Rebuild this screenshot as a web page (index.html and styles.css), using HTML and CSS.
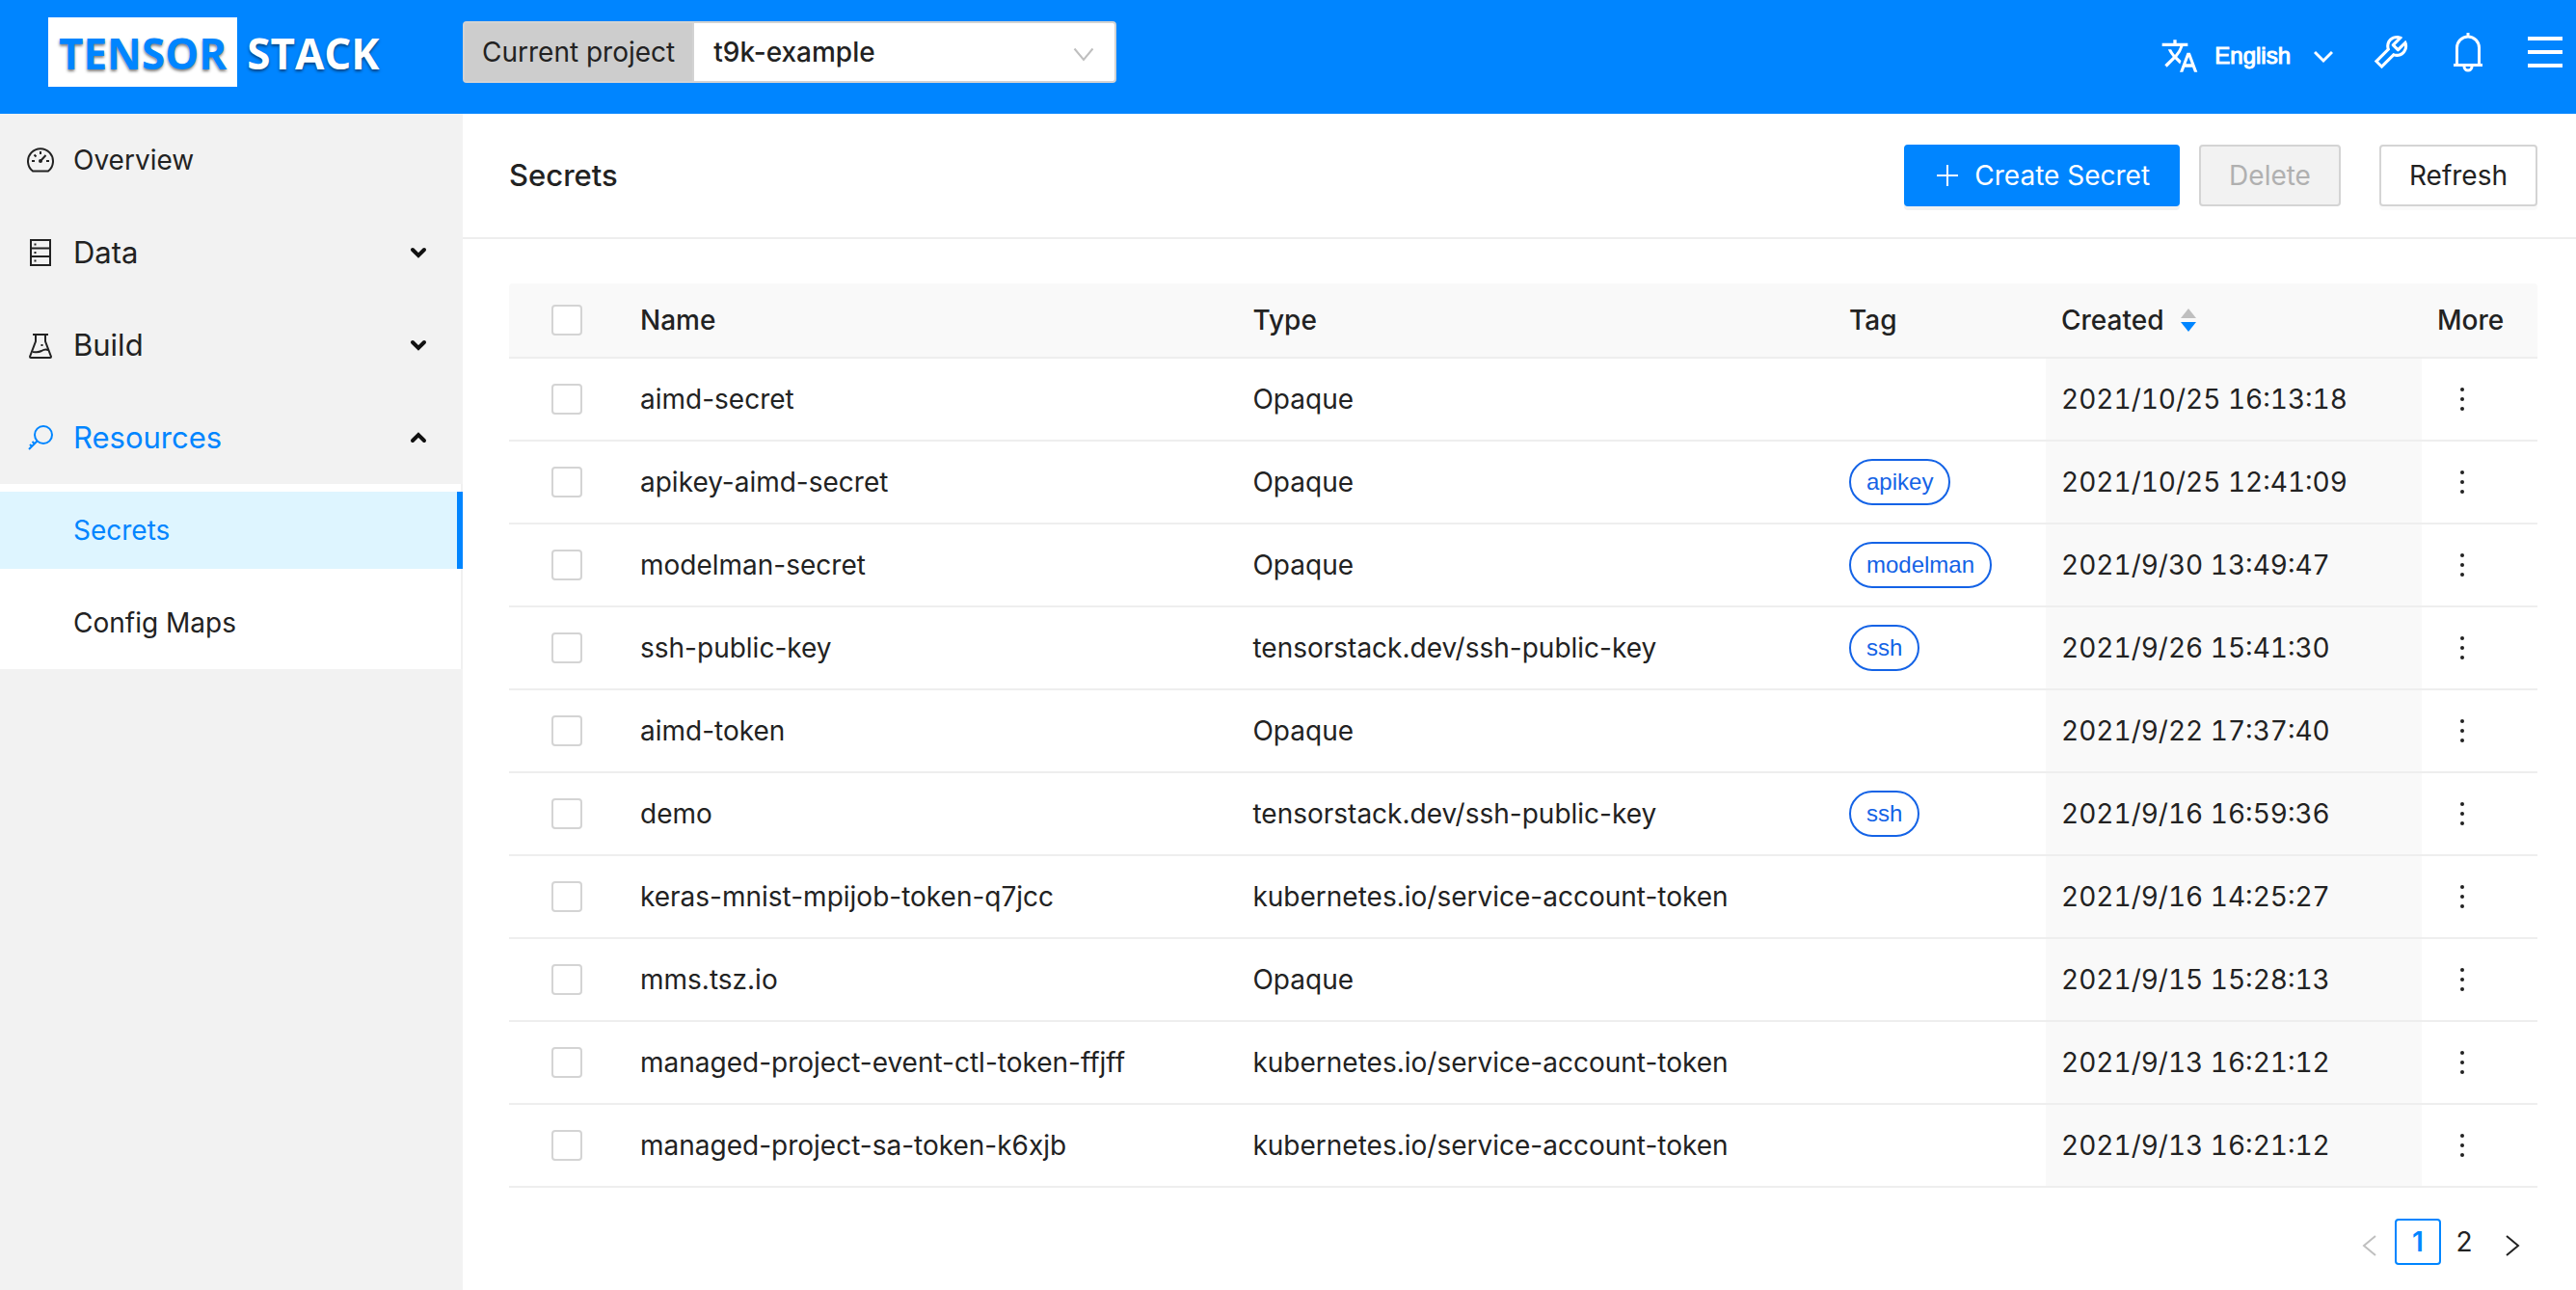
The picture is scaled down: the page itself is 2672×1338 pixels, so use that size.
FILE: index.html
```html
<!DOCTYPE html>
<html lang="en">
<head>
<meta charset="utf-8">
<title>Secrets</title>
<link rel="stylesheet" href="styles.css">
</head>
<body>
<header class="topbar">
  <a class="logo" href="#"><span class="logo-box">TENSOR</span><span class="logo-rest">STACK</span></a>
  <div class="project">
    <label class="project-label" for="project">Current project</label>
    <div class="project-field">
      <select id="project" class="project-select"><option>t9k-example</option></select>
      <svg class="project-arrow" width="24" height="24" viewBox="0 0 24 24" fill="none" stroke="#bfbfbf" stroke-width="2"><path d="M2.500 6.500 12 18l9.500-11.500"/></svg>
    </div>
  </div>
  <nav class="tools" aria-label="Tools">
    <button class="lang" type="button">
      <svg width="40" height="40" viewBox="0 0 24 24" fill="currentColor"><path d="M12.870 15.070l-2.540-2.510.030-.030A17.520 17.520 0 0 0 14.070 6H17V4h-7V2H8v2H1v1.990h11.170C11.500 7.920 10.440 9.750 9 11.350 8.070 10.320 7.300 9.190 6.690 8h-2c.730 1.630 1.730 3.170 2.980 4.560l-5.090 5.020L4 19l5-5 3.110 3.110.760-2.040zM18.500 10h-2L12 22h2l1.120-3h4.750L21 22h2l-4.500-12zm-2.620 7l1.620-4.330L19.120 17h-3.240z"/></svg>
      <span class="lang-name">English</span>
      <svg width="20" height="20" viewBox="0 0 20 20" fill="none" stroke="currentColor" stroke-width="3"><path d="M1 6l9 9 9-9"/></svg>
    </button>
    <button class="tool" type="button" aria-label="Settings"><svg width="44" height="44" viewBox="0 0 1024 1024" fill="currentColor"><path d="M876.600 239.500c-.500-.900-1.200-1.800-2-2.500-5-5-13.100-5-18.100 0L684.200 409.300l-67.900-67.900L788.700 169c.800-.800 1.400-1.600 2-2.500 3.600-6.100 1.600-13.900-4.500-17.500-98.200-58-226.800-44.700-311.300 39.700-67 67-89.200 162-66.500 247.400l-293 293c-3 3-2.800 7.900.300 11l169.700 169.700c3.100 3.100 8.100 3.300 11 .300l292.900-292.900c85.500 22.800 180.500.700 247.600-66.400 84.400-84.500 97.700-213.100 39.700-311.300zM786 499.800c-58.100 58.100-145.300 69.300-214.600 33.600l-8.800 8.800-.100-.100-274 274.100-79.200-79.200 230.100-230.100s0 .100.100.100l52.800-52.800c-35.700-69.300-24.500-156.500 33.600-214.600a184.200 184.200 0 0 1 144-53.500L537 318.900a32.050 32.050 0 0 0 0 45.300l124.500 124.500a32.050 32.050 0 0 0 45.300 0l132.800-132.800c3.700 51.800-14.400 104.800-53.600 143.900z"/></svg></button>
    <button class="tool" type="button" aria-label="Notifications"><svg width="40" height="44" viewBox="0 0 40 44" fill="none" stroke="currentColor" stroke-width="3"><path d="M8.500 35V17.500a11.500 11.500 0 0 1 23 0V35M5 35.500h30M20 6V2M16 36v1a4 4 0 0 0 8 0v-1"/></svg></button>
    <button class="tool" type="button" aria-label="Menu"><svg width="36" height="32" viewBox="0 0 36 32" fill="currentColor"><path d="M0 0h36v4H0zM0 14h36v4H0zM0 28h36v4H0z"/></svg></button>
  </nav>
</header>
<div class="body">
  <nav class="sidebar" aria-label="Main">
    <a class="item item-small" href="#"><svg class="item-icon" viewBox="0 0 28 28" fill="none" stroke="currentColor" stroke-width="2"><path d="M6 25.500a13 13 0 1 1 16 0z"/><path d="M14 5v3M5 15h3M20 15h3M7.500 8.500l2 2M14 15l5.500-6"/><circle cx="14" cy="15" r="1"/></svg><span>Overview</span></a>
    <button class="item" type="button"><svg class="item-icon" viewBox="0 0 28 28" fill="none" stroke="currentColor" stroke-width="2"><path d="M4 1h20v26H4zM4 9.500h20M4 18h20"/><path d="M7.500 5.500h2M7.500 14h2M7.500 22.500h2"/></svg><span class="item-text">Data</span><svg class="item-chevron" viewBox="0 0 20 20"><path d="M4 7l6 6 6-6"/></svg></button>
    <button class="item" type="button"><svg class="item-icon" viewBox="0 0 28 28" fill="none" stroke="currentColor" stroke-width="2"><path d="M6 3h16M9 3v7L3 26q0 1 1 1h20q1 0 1-1L19 10V3M6 21c4 0 5 1 9-1 3-2 5-2 7-1"/><path d="M14.500 14h2"/></svg><span class="item-text">Build</span><svg class="item-chevron" viewBox="0 0 20 20"><path d="M4 7l6 6 6-6"/></svg></button>
    <button class="item item-open" type="button" aria-expanded="true"><svg class="item-icon" viewBox="0 0 28 28" fill="none" stroke="currentColor" stroke-width="2"><circle cx="17" cy="11" r="9"/><path d="M10.500 17.500L2 26M5.500 18l3 3M3 21l2.500 2.500"/></svg><span class="item-text">Resources</span><svg class="item-chevron" viewBox="0 0 20 20"><path d="M4 13l6-6 6 6"/></svg></button>
    <div class="sub">
      <a class="sub-item sub-active" href="#" aria-current="page">Secrets</a>
      <a class="sub-item" href="#">Config Maps</a>
    </div>
  </nav>
  <main class="main">
    <div class="page-head">
      <h1 class="title">Secrets</h1>
      <button class="btn btn-primary" type="button"><svg width="28" height="28" viewBox="0 0 28 28" stroke="currentColor" stroke-width="2"><path d="M14 3v22M3 14h22"/></svg>Create Secret</button>
      <button class="btn btn-delete" type="button" disabled>Delete</button>
      <button class="btn" type="button">Refresh</button>
    </div>
    <div class="content">
      <table class="table">
        <colgroup><col class="c-check"><col><col class="c-type"><col class="c-tag"><col class="c-created"><col class="c-more"></colgroup>
        <thead><tr><th><input class="check" type="checkbox" aria-label="Select all"></th><th>Name</th><th>Type</th><th>Tag</th><th><span class="sorter">Created<svg width="16" height="24" viewBox="0 0 16 24"><path fill="#bfbfbf" d="M0 10L8 0l8 10z"/><path fill="#0085ff" d="M0 14h16L8 24z"/></svg></span></th><th>More</th></tr></thead>
        <tbody>
          <tr><td><input class="check" type="checkbox" aria-label="aimd-secret"></td><td>aimd-secret</td><td>Opaque</td><td></td><td class="date">2021/10/25 16:13:18</td><td><button class="more" type="button" aria-label="More actions"><i></i><i></i><i></i></button></td></tr>
          <tr><td><input class="check" type="checkbox" aria-label="apikey-aimd-secret"></td><td>apikey-aimd-secret</td><td>Opaque</td><td><span class="tag">apikey</span></td><td class="date">2021/10/25 12:41:09</td><td><button class="more" type="button" aria-label="More actions"><i></i><i></i><i></i></button></td></tr>
          <tr><td><input class="check" type="checkbox" aria-label="modelman-secret"></td><td>modelman-secret</td><td>Opaque</td><td><span class="tag">modelman</span></td><td class="date">2021/9/30 13:49:47</td><td><button class="more" type="button" aria-label="More actions"><i></i><i></i><i></i></button></td></tr>
          <tr><td><input class="check" type="checkbox" aria-label="ssh-public-key"></td><td>ssh-public-key</td><td>tensorstack.dev/ssh-public-key</td><td><span class="tag">ssh</span></td><td class="date">2021/9/26 15:41:30</td><td><button class="more" type="button" aria-label="More actions"><i></i><i></i><i></i></button></td></tr>
          <tr><td><input class="check" type="checkbox" aria-label="aimd-token"></td><td>aimd-token</td><td>Opaque</td><td></td><td class="date">2021/9/22 17:37:40</td><td><button class="more" type="button" aria-label="More actions"><i></i><i></i><i></i></button></td></tr>
          <tr><td><input class="check" type="checkbox" aria-label="demo"></td><td>demo</td><td>tensorstack.dev/ssh-public-key</td><td><span class="tag">ssh</span></td><td class="date">2021/9/16 16:59:36</td><td><button class="more" type="button" aria-label="More actions"><i></i><i></i><i></i></button></td></tr>
          <tr><td><input class="check" type="checkbox" aria-label="keras-mnist-mpijob-token-q7jcc"></td><td>keras-mnist-mpijob-token-q7jcc</td><td>kubernetes.io/service-account-token</td><td></td><td class="date">2021/9/16 14:25:27</td><td><button class="more" type="button" aria-label="More actions"><i></i><i></i><i></i></button></td></tr>
          <tr><td><input class="check" type="checkbox" aria-label="mms.tsz.io"></td><td>mms.tsz.io</td><td>Opaque</td><td></td><td class="date">2021/9/15 15:28:13</td><td><button class="more" type="button" aria-label="More actions"><i></i><i></i><i></i></button></td></tr>
          <tr><td><input class="check" type="checkbox" aria-label="managed-project-event-ctl-token-ffjff"></td><td>managed-project-event-ctl-token-ffjff</td><td>kubernetes.io/service-account-token</td><td></td><td class="date">2021/9/13 16:21:12</td><td><button class="more" type="button" aria-label="More actions"><i></i><i></i><i></i></button></td></tr>
          <tr><td><input class="check" type="checkbox" aria-label="managed-project-sa-token-k6xjb"></td><td>managed-project-sa-token-k6xjb</td><td>kubernetes.io/service-account-token</td><td></td><td class="date">2021/9/13 16:21:12</td><td><button class="more" type="button" aria-label="More actions"><i></i><i></i><i></i></button></td></tr>
        </tbody>
      </table>
      <nav class="pages" aria-label="Pages">
        <button class="page-arrow" type="button" disabled aria-label="Previous page"><svg width="24" height="24" viewBox="0 0 24 24"><path d="M18 2L6 12l12 10"/></svg></button>
        <a class="page page-current" href="#" aria-current="page">1</a>
        <a class="page" href="#">2</a>
        <button class="page-arrow" type="button" aria-label="Next page"><svg width="24" height="24" viewBox="0 0 24 24"><path d="M6 2l12 10L6 22"/></svg></button>
      </nav>
    </div>
  </main>
</div>
</body>
</html>
```
FILE: styles.css
```css
*, *::before, *::after { box-sizing: border-box; }

body {
  margin: 0;
  min-height: 100vh;
  display: flex;
  flex-direction: column;
  background: #fff;
  color: #222;
  font: 400 28px/44px Inter, "Liberation Sans", sans-serif;
}

a { color: inherit; text-decoration: none; }
button { font: inherit; color: inherit; margin: 0; padding: 0; border: 0; background: none; }
svg { display: block; flex: none; }

/* Top bar */
.topbar {
  display: flex;
  align-items: center;
  height: 118px;
  padding: 0 12px 10px 50px;
  background: #0085ff;
  color: #fff;
}
.logo {
  display: flex;
  width: 430px;
  height: 72px;
  flex: none;
  gap: 10px;
  font: 700 44px/74px "Open Sans", sans-serif;
  text-shadow: 0 2px 3px rgba(0, 0, 0, .5);
}
.logo-box { padding: 0 11px; background: #fff; color: #0085ff; }

.project { display: flex; width: 678px; height: 64px; border: 2px solid #d3d3d3; border-radius: 4px; background: #fff; color: #222; }
.project-label { padding: 0 18px; line-height: 60px; background: #cdcdcd; border-right: 2px solid #d3d3d3; }
.project-field { position: relative; flex: 1; }
.project-select {
  width: 100%;
  height: 60px;
  padding: 0 60px 0 20px;
  border: 0;
  background: none;
  appearance: none;
  color: inherit;
  font: inherit;
  font-weight: 500;
}
.project-arrow { position: absolute; right: 20px; top: 20px; pointer-events: none; }

.tools { display: flex; align-items: center; margin-left: auto; gap: 40px; }
.tool { display: grid; place-content: center; width: 40px; height: 44px; }
.lang { display: flex; align-items: center; padding-top: 8px; gap: 16px; }
.lang-name { font: 400 24px/40px "Liberation Sans", sans-serif; -webkit-text-stroke: 1px; margin-right: 8px; }

/* Side bar */
.body { display: flex; flex: 1; }
.sidebar { width: 480px; flex: none; padding-top: 8px; background: #f2f2f2; }
.item {
  display: flex;
  align-items: center;
  width: 100%;
  height: 80px;
  margin-bottom: 16px;
  padding: 0 36px 0 28px;
  gap: 20px;
  font-size: 31px;
  text-align: left;
}
.item-small { font-size: 28px; }
.item-open { margin-bottom: 8px; color: #0085ff; }
.item-icon { width: 28px; height: 28px; }
.item-text { flex: 1; }
.item-chevron { width: 20px; height: 20px; fill: none; stroke: #111; stroke-width: 4; stroke-linecap: round; }
.sub { display: grid; gap: 16px; padding: 8px 0; background: #fff; box-shadow: inset -2px 0 #f0f0f0; }
.sub-item { padding: 0 76px; line-height: 80px; }
.sub-active { background: #def5ff; color: #0085ff; border-right: 6px solid #0085ff; }

/* Page header */
.main { flex: 1; min-width: 0; }
.page-head { display: flex; align-items: center; height: 130px; padding: 0 40px 0 48px; border-bottom: 2px solid #eee; }
.title { flex: 1; margin: 0; font-size: 31px; font-weight: 500; }
.btn {
  display: flex;
  align-items: center;
  justify-content: center;
  gap: 14px;
  height: 64px;
  padding: 0 29px;
  border: 2px solid #d4d4d4;
  border-radius: 4px;
  background: #fff;
  box-shadow: 0 4px #fafafa;
}
.btn-primary { margin-right: 20px; border-color: #0085ff; background: #0085ff; color: #fff; box-shadow: 0 4px #f2f2f2; }
.btn-delete { margin-right: 40px; background: #f2f2f2; color: #b0b0b0; box-shadow: none; }

/* Table */
.content { padding: 46px 40px 26px 48px; }
.table { width: 100%; table-layout: fixed; border-collapse: separate; border-spacing: 0; }
.c-check { width: 120px; }
.c-type { width: 29.4%; }
.c-tag { width: 220px; }
.c-created { width: 390px; }
.c-more { width: 120px; }
.table th, .table td { padding: 0 16px; border-bottom: 2px solid #eee; text-align: left; white-space: nowrap; }
.table th { height: 78px; background: #f9f9f9; font-weight: 500; }
.table td { height: 86px; }
.table th:first-child { border-top-left-radius: 4px; }
.table th:last-child { border-top-right-radius: 4px; }
.table .date { background: #f9f9f9; font-feature-settings: "tnum"; }
.check { display: block; width: 32px; height: 32px; margin: 0 auto; appearance: none; border: 2px solid #d4d4d4; border-radius: 4px; background: #fff; }
.sorter { display: flex; align-items: center; gap: 18px; }
.tag {
  display: inline-block;
  height: 48px;
  padding: 0 16px;
  border: 2px solid #1463e6;
  border-radius: 24px;
  color: #1463e6;
  font: 400 24px/44px "Liberation Sans", sans-serif;
  vertical-align: middle;
}
.more { display: grid; place-content: center; gap: 6px; width: 52px; height: 24px; }
.more i { width: 4px; height: 4px; border-radius: 2px; background: #222; }

/* Pagination */
.pages { display: flex; justify-content: flex-end; margin-top: 32px; }
.page { width: 48px; height: 48px; border: 2px solid transparent; border-radius: 4px; text-align: center; }
.page-current { border-color: #0085ff; color: #0085ff; font-weight: 600; }
.page-arrow { display: grid; place-items: center; width: 52px; height: 48px; padding-top: 8px; }
.page-arrow path { fill: none; stroke: #222; stroke-width: 2; }
.page-arrow:disabled path { stroke: #bfbfbf; }
```
